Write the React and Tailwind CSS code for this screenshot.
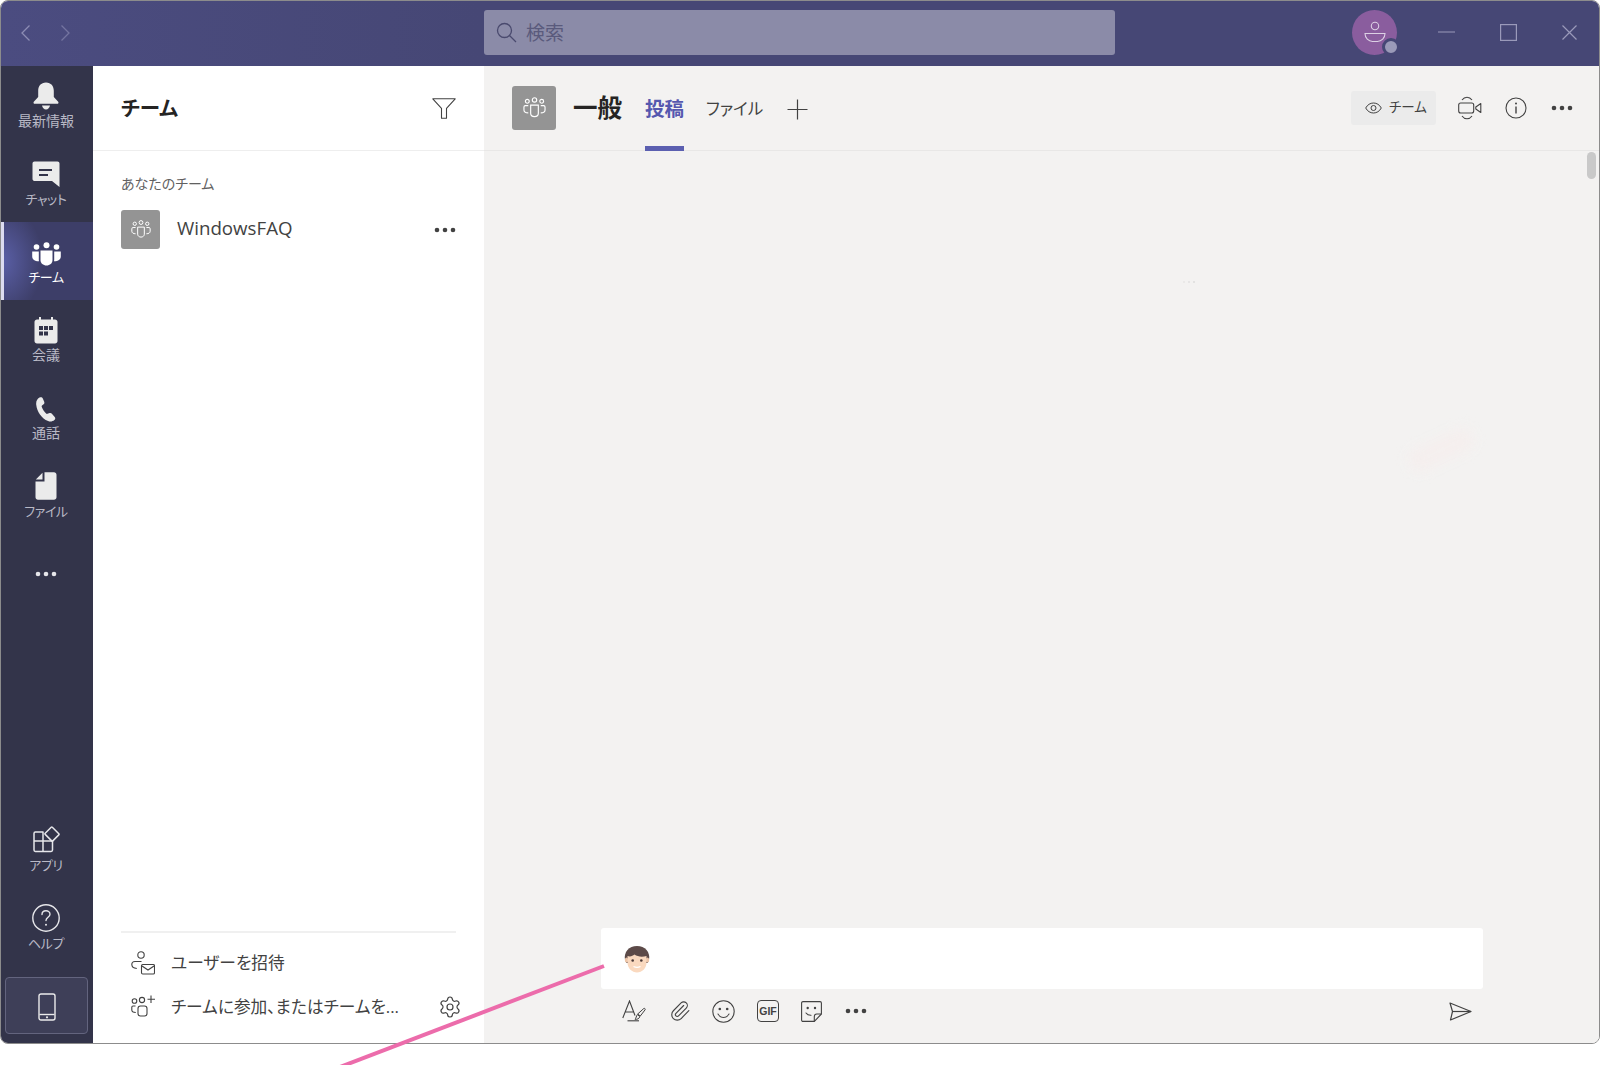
import React from "react";
import { Paperclip, Settings } from "lucide-react";

const FONT = "font-['Open_Sans','Noto_Sans_CJK_JP',sans-serif] [font-feature-settings:'palt']";
const Svg = ({ w, h, vb, children, className = "" }) => (
  <svg width={w} height={h} viewBox={vb} fill="none" className={`shrink-0 ${className}`}>{children}</svg>
);

const Bell = () => (
  <Svg w={26} h={28} vb="0 0 26 28">
    <path d="M13 0.5c5 0 7.8 3.6 7.8 8.2v6.3l4.4 4.7c.7.9.1 2.1-1 2.1H1.8c-1.100 0-1.700-1.200-1-2.100L5.200 15V8.700C5.200 4.100 8 .5 13 .5z" fill="#ebebeb" />
    <path d="M9 23.600h8c-.4 2.400-2 3.900-4 3.900s-3.600-1.500-4-3.900z" fill="#ebebeb" />
  </Svg>
);
const Chat = () => (
  <Svg w={28} h={27} vb="0 0 28 27">
    <path d="M2.500.5h23c1.100 0 2 .9 2 2v23.500l-7.500-6H2.500c-1.100 0-2-.9-2-2V2.500c0-1.100.9-2 2-2z" fill="#ebebeb" />
    <path d="M7 8h13v2H7zM7 13h9v2H7z" fill="#33344a" />
  </Svg>
);
const TeamSolid = () => (
  <Svg w={29} h={24} vb="0 0 29 24">
    <circle cx="14.500" cy="3.200" r="3" fill="#fff" />
    <circle cx="4.500" cy="5" r="2.800" fill="#fff" />
    <circle cx="24.500" cy="5" r="2.800" fill="#fff" />
    <path d="M8.500 8.500h12v9.500c0 3.200-2.700 5.500-6 5.500s-6-2.300-6-5.500z" fill="#fff" />
    <path d="M.2 9.500h6.600v8.300c0 .6.100 1 .2 1.500C3.200 19.500.2 17.500.2 14.500zM28.800 9.500h-6.600v8.300c0 .6-.1 1-.2 1.500 3.800.2 6.800-1.800 6.800-4.800z" fill="#fff" />
  </Svg>
);
const Calendar = () => (
  <Svg w={24} h={27} vb="0 0 24 27">
    <path d="M5 0h2v3H5zM17 0h2v3h-2z" fill="#ebebeb" />
    <path d="M3 2.500h18c1.400 0 2.500 1.100 2.500 2.500v19c0 1.400-1.100 2.500-2.500 2.500H3C1.600 26.500.5 25.400.5 24V5C.5 3.600 1.600 2.500 3 2.500z" fill="#ebebeb" />
    <path d="M5 9h4v4H5zM10 9h4v4h-4zM15 9h4v4h-4zM5 14.500h4v4H5zM10 14.500h4v4h-4z" fill="#33344a" />
  </Svg>
);
const Phone = () => (
  <Svg w={21} h={25} vb="0 0 21 25">
    <path d="M3.500.6C5 0 6.300.3 6.800 1.600l1.400 3.200c.4 1 .1 1.900-.6 2.500L6 8.600c-.4.400-.4.900-.2 1.400.9 2.400 2.400 4.700 4.300 6.500.4.400.9.500 1.400.3l2.100-.7c1-.3 1.900 0 2.500.8l2.600 3c.9 1.100.7 2.300-.3 3.100-1.800 1.500-4.200 2-6.300 1C5.600 21.600.9 14.700.2 7.500-.1 4.500 1.200 1.700 3.500.6z" fill="#ebebeb" />
  </Svg>
);
const FileI = () => (
  <Svg w={22} h={28} vb="0 0 22 28">
    <path d="M9.500.3H19c1.400 0 2.500 1.100 2.500 2.500v22.500c0 1.400-1.100 2.500-2.500 2.500H3C1.600 27.800.5 26.700.5 25.300V9.500h9zM.8 7.500 7.500.8v6.700z" fill="#ebebeb" />
  </Svg>
);
const Dots = ({ c = "#424242", size = 22 }) => (
  <Svg w={size} h={6} vb="0 0 22 6">
    <circle cx="3" cy="3" r="2.300" fill={c} />
    <circle cx="11" cy="3" r="2.300" fill={c} />
    <circle cx="19" cy="3" r="2.300" fill={c} />
  </Svg>
);
const Apps = () => (
  <Svg w={28} h={28} vb="0 0 28 28">
    <g stroke="#e6e6ea" strokeWidth="1.500" strokeLinejoin="round">
      <path d="M2 7.500c0-.8.600-1.400 1.400-1.400h7.600v8.900H2zM2 15h9v10.500H3.400c-.8 0-1.400-.6-1.400-1.400zM11 15h9.500v9.100c0 .8-.6 1.400-1.400 1.400H11z" />
      <path d="M20.300 1.300 26.800 7.800c.3.300.3.800 0 1.100l-6 6c-.3.300-.8.300-1.100 0L13.200 8.400c-.3-.3-.3-.8 0-1.100l6-6c.3-.3.800-.3 1.100 0z" />
    </g>
  </Svg>
);
const Help = () => (
  <Svg w={28} h={28} vb="0 0 28 28">
    <circle cx="14" cy="14" r="13.200" stroke="#e6e6ea" strokeWidth="1.400" />
    <path d="M10 10.500c0-2.300 1.800-3.800 4-3.800s4 1.500 4 3.500c0 3-4 3.200-4 6.300" stroke="#e6e6ea" strokeWidth="1.400" strokeLinecap="round" />
    <circle cx="14" cy="20.800" r="1" fill="#e6e6ea" />
  </Svg>
);
const Mobile = () => (
  <Svg w={18} h={28} vb="0 0 18 28">
    <rect x="1" y="1" width="16" height="26" rx="2" stroke="#ebebeb" strokeWidth="1.400" />
    <path d="M1.500 21.500h15" stroke="#ebebeb" strokeWidth="1.400" />
    <circle cx="9" cy="24.300" r="1.100" fill="#ebebeb" />
  </Svg>
);

const TeamOutline = ({ size = 24, c = "#fff", sw = 1.200 }) => (
  <Svg w={size} h={size * 0.92} vb="0 0 24 22">
    <g stroke={c} strokeWidth={sw}>
      <circle cx="12" cy="3" r="2.300" />
      <circle cx="4.500" cy="4.500" r="2" />
      <circle cx="19.500" cy="4.500" r="2" />
      <path d="M8 8.500h8v8.500c0 2-1.800 3.500-4 3.500s-4-1.500-4-3.500z" />
      <path d="M5.500 9H2.500C1.500 9 1 9.600 1 10.500v3c0 1.800 1.800 3 4.500 3M18.500 9h3c1 0 1.500.6 1.500 1.500v3c0 1.800-1.800 3-4.500 3" />
    </g>
  </Svg>
);

const NavItem = ({ icon, label, active, kana }) => (
  <div className={`relative h-[78px] pr-[2px] flex flex-col items-center ${active ? "bg-[radial-gradient(ellipse_60px_80px_at_0%_50%,#5b60a8_0%,#3d3e68_70%,#3d3e68_100%)]" : ""}`}>
    {active && <div className="absolute left-0 top-0 bottom-0 w-[3px] bg-[#dcdcf0]" />}
    <div className="h-[44px] flex items-end justify-center pb-[1px] shrink-0 w-full mt-[1px]">{icon}</div>
    <div className={`leading-[18px] mt-[1px] ${kana ? "text-[13px] tracking-[-0.4px]" : "text-[14px]"} ${active ? "text-white" : "text-[#b9b9c6]"}`}>{label}</div>
  </div>
);

const Sidebar = () => (
  <div className="w-[92px] shrink-0 bg-[#33344a] flex flex-col">
    <NavItem icon={<Bell />} label="最新情報" />
    <NavItem icon={<Chat />} label="チャット" kana />
    <NavItem icon={<TeamSolid />} label="チーム" active kana />
    <NavItem icon={<Calendar />} label="会議" />
    <NavItem icon={<Phone />} label="通話" />
    <NavItem icon={<FileI />} label="ファイル" kana />
    <div className="h-[78px] pt-[2px] pr-[2px] flex items-center justify-center"><Dots c="#e6e6ea" size={28} /></div>
    <div className="mt-auto">
      <NavItem icon={<Apps />} label="アプリ" kana />
      <NavItem icon={<Help />} label="ヘルプ" kana />
      <div className="mt-[11px] ml-[4px] mr-[5px] mb-[9px] h-[57px] pt-[3px] rounded-[4px] border border-[#63647e] bg-[#3e3f58] flex items-center justify-center"><Mobile /></div>
    </div>
  </div>
);

const TitleBar = () => (
  <div className="h-[65px] shrink-0 pb-[2px] bg-[linear-gradient(90deg,#4b4c80_0%,#464775_30%,#464775_100%)] flex items-center">
    <div className="w-[483px] shrink-0 flex items-center pl-[19px] gap-[29px]">
      <Svg w={11} h={18} vb="0 0 11 18"><path d="M9.500 1.500 2 9l7.500 7.500" stroke="#8c8cb3" strokeWidth="1.300" /></Svg>
      <Svg w={11} h={18} vb="0 0 11 18"><path d="M1.500 1.500 9 9l-7.500 7.500" stroke="#7474a0" strokeWidth="1.300" /></Svg>
    </div>
    <div className="w-[631px] h-[45px] rounded-[3px] bg-[#8b8ba8] flex items-center pl-[12px] gap-[9px]">
      <Svg w={21} h={21} vb="0 0 21 21">
        <circle cx="8.500" cy="8.500" r="7" stroke="#4a4a6e" strokeWidth="1.300" />
        <path d="m13.500 13.500 6.500 6.500" stroke="#4a4a6e" strokeWidth="1.300" />
      </Svg>
      <span className="text-[19px] text-[#5a5a7c] leading-none mt-[2px]">検索</span>
    </div>
    <div className="ml-[237px] w-[45px] h-[45px] rounded-full bg-[#8a5d9e] relative flex items-center justify-center shrink-0">
      <Svg w={22} h={24} vb="0 0 22 24">
        <circle cx="11" cy="5" r="3.700" stroke="#dcd0e4" strokeWidth="1.100" />
        <path d="M1 12.500h20c0 4.500-3.500 8-7.500 8h-5C4.500 20.500 1 17 1 12.500z" stroke="#dcd0e4" strokeWidth="1.100" />
      </Svg>
      <div className="absolute right-[-3px] bottom-[-1px] w-[18px] h-[18px] rounded-full bg-[#9a9ab8] border-[3px] border-[#464775]" />
    </div>
    <div className="ml-[41px] flex items-center gap-[45px] text-[#9d9dbd]">
      <Svg w={17} h={17} vb="0 0 17 17"><path d="M0 8h17" stroke="#9a9aba" strokeWidth="1.200" /></Svg>
      <Svg w={17} h={17} vb="0 0 17 17"><rect x=".6" y=".6" width="15.800" height="15.800" stroke="#9a9aba" strokeWidth="1.200" /></Svg>
      <Svg w={15} h={15} vb="0 0 15 15"><path d="m.5.5 14 14m0-14-14 14" stroke="#9a9aba" strokeWidth="1.200" /></Svg>
    </div>
  </div>
);

const Panel = () => (
  <div className="w-[391px] shrink-0 bg-white flex flex-col">
    <div className="h-[85px] shrink-0 border-b border-[#eeeeee] flex items-center justify-between pl-[28px] pr-[28px]">
      <span className="text-[20.500px] font-bold text-[#252423] leading-none">チーム</span>
      <Svg w={24} h={21} vb="0 0 24 21">
        <path d="M.8.8h22.400l-8.700 9.500v9.900H9.500v-9.900z" stroke="#424242" strokeWidth="1.100" strokeLinejoin="round" />
      </Svg>
    </div>
    <div className="pl-[28px] pr-[28px] pt-[23px] flex-1 flex flex-col">
      <div className="text-[14px] leading-[20px] text-[#616161]">あなたのチーム</div>
      <div className="mt-[16px] flex items-center h-[39px]">
        <div className="w-[39px] h-[39px] rounded-[3px] bg-[#949494] flex items-center justify-center"><TeamOutline size={20} /></div>
        <span className="ml-[17px] text-[18.700px] text-[#424242] leading-none -mt-[2px]">WindowsFAQ</span>
        <span className="ml-auto flex"><Dots /></span>
      </div>
      <div className="mt-auto h-[2px] bg-[#f0f0f0]" />
      <div className="h-[110px] shrink-0 relative pt-[14px]">
        <div className="flex items-center h-[32px] pl-[10px]">
          <Svg w={24} h={24} vb="0 0 24 24">
            <g stroke="#424242" strokeWidth="1.100">
              <circle cx="10" cy="4" r="3.200" />
              <path d="M10.500 10.500H4C2 10.500 .8 11.800 .8 13.500c0 2 1.800 3.700 5 4" />
              <rect x="10.500" y="13.500" width="13" height="9.500" rx="1.200" />
              <path d="m11 15 6 4 6-4" />
            </g>
          </Svg>
          <span className="ml-[16px] text-[16.700px] text-[#424242] leading-none">ユーザーを招待</span>
        </div>
        <div className="flex items-center h-[32px] pl-[10px] mt-[12px]">
          <Svg w={24} h={24} vb="0 0 24 24">
            <g stroke="#424242" strokeWidth="1.100">
              <circle cx="3.500" cy="6" r="2.300" />
              <circle cx="11" cy="5" r="2.600" />
              <rect x="7" y="11" width="9" height="10" rx="2.500" />
              <path d="M4.500 11H2C1.200 11 .8 11.500 .8 12.300V15c0 1.500 1.300 2.500 4 2.500" />
              <path d="M20 .5v7.500M16.500 4.200h7.500" />
            </g>
          </Svg>
          <span className="ml-[16px] text-[16.700px] text-[#424242] leading-none whitespace-nowrap">チームに参加、またはチームを...</span>
          <Settings size={24} strokeWidth={1.2} color="#424242" className="ml-auto mr-[-6px] shrink-0" />
        </div>
      </div>
    </div>
  </div>
);

const MainHeader = () => (
  <div className="h-[85px] shrink-0 border-b border-[#e8e7e6] flex items-center pl-[28px] pr-[26px]">
    <div className="w-[44px] h-[44px] rounded-[3px] bg-[#949494] flex items-center justify-center"><TeamOutline size={23} /></div>
    <span className="ml-[17px] text-[24.500px] font-bold text-[#252423] leading-none">一般</span>
    <div className="ml-[23px] relative self-stretch flex items-center">
      <span className="text-[19.500px] font-bold text-[#5558af] leading-none mt-[2px]">投稿</span>
      <div className="absolute left-0 right-0 bottom-[-1px] h-[5px] bg-[#5b5fb0]" />
    </div>
    <span className="ml-[22px] text-[16.500px] text-[#424242] leading-none mt-[2px]">ファイル</span>
    <span className="ml-[24px] flex mt-[2px]">
      <Svg w={21} h={21} vb="0 0 21 21"><path d="M10.500.5v20M.5 10.500h20" stroke="#424242" strokeWidth="1.200" /></Svg>
    </span>
    <div className="ml-auto flex items-center">
      <div className="w-[85px] h-[34px] rounded-[3px] bg-[#ebebeb] flex items-center pl-[14px] gap-[7px]">
        <Svg w={17} h={12} vb="0 0 17 12">
          <path d="M.7 6C2.500 2.700 5.300 1 8.500 1s6 1.700 7.800 5c-1.800 3.300-4.600 5-7.800 5S2.500 9.300.7 6z" stroke="#424242" strokeWidth="1" />
          <circle cx="8.500" cy="6" r="2.500" stroke="#424242" strokeWidth="1" />
        </Svg>
        <span className="text-[13.500px] text-[#424242] leading-none">チーム</span>
      </div>
      <span className="ml-[22px] flex">
        <Svg w={24} h={24} vb="0 0 24 24">
          <rect x=".7" y="7" width="15" height="10" rx="2" stroke="#424242" strokeWidth="1.100" />
          <path d="M22.800 7.500v9l-5-3.500v-2z" stroke="#424242" strokeWidth="1.100" strokeLinejoin="round" />
          <path d="M4 4c1.300-1.800 3-2.800 5-2.800S12.700 2.200 14 4M4 20c1.300 1.800 3 2.800 5 2.800s3.700-1 5-2.800" stroke="#424242" strokeWidth="1.100" />
        </Svg>
      </span>
      <span className="ml-[23px] flex">
        <Svg w={22} h={22} vb="0 0 22 22">
          <circle cx="11" cy="11" r="10" stroke="#424242" strokeWidth="1.100" />
          <path d="M11 9.500v7" stroke="#424242" strokeWidth="1.400" />
          <circle cx="11" cy="6.500" r="1" fill="#424242" />
        </Svg>
      </span>
      <span className="ml-[24px] flex"><Dots /></span>
    </div>
  </div>
);

const Avatar = () => (
  <Svg w={28} h={28} vb="0 0 28 28">
    <path d="M2 15C.5 7 6 1 14 1s13.500 6 12 14l-1.500 3H3.500z" fill="#5c4a48" />
    <ellipse cx="3.500" cy="15" rx="1.700" ry="2.600" fill="#ecc5a8" />
    <ellipse cx="24.500" cy="15" rx="1.700" ry="2.600" fill="#ecc5a8" />
    <path d="M4.500 11c3 1 5 0 7-1.500 3 2 7 3 12 1.500v7c0 5-4.500 9.500-9.500 9.500S4.500 23 4.500 18z" fill="#fad9bf" />
    <circle cx="9.700" cy="15.500" r="1.300" fill="#4a3a38" />
    <circle cx="18.300" cy="15.500" r="1.300" fill="#4a3a38" />
    <path d="M10.500 21.500c2 1 5 1 7 0" stroke="#fff" strokeWidth="1.200" />
  </Svg>
);

const S = "#424242";
const Toolbar = () => (
  <div className="h-[44px] mb-[10px] flex items-center pl-[21px] pr-[11px]">
    <span className="flex w-[24px]">
      <Svg w={24} h={22} vb="0 0 24 22">
        <path d="M.8 18 7.500 1l5.500 14.500M3 12h8.500" stroke={S} strokeWidth="1.100" />
        <path d="M5.500 20.800H17" stroke={S} strokeWidth="1.100" />
        <path d="M21.800 8.500c.8-.5 1.800.4 1.300 1.300l-4.800 6.200-2.600-2zM15.300 14.600l2.500 2c-.5 2-2.400 3-4.800 2.700 1.200-.9 1.300-3.600 2.300-4.700z" stroke={S} strokeWidth="1" strokeLinejoin="round" />
      </Svg>
    </span>
    <span className="ml-[23px] flex w-[21px]">
      <Paperclip size={22} strokeWidth={1.2} color={S} className="shrink-0" />
    </span>
    <span className="ml-[22px] flex w-[23px]">
      <Svg w={23} h={23} vb="0 0 23 23">
        <circle cx="11.500" cy="11.500" r="10.700" stroke={S} strokeWidth="1.100" />
        <circle cx="7.800" cy="9" r="1.300" fill={S} />
        <circle cx="15.200" cy="9" r="1.300" fill={S} />
        <path d="M6 14c1.300 2.300 3.200 3.500 5.500 3.500S15.700 16.300 17 14" stroke={S} strokeWidth="1.100" strokeLinecap="round" />
      </Svg>
    </span>
    <span className="ml-[22px] flex items-center justify-center w-[22px] h-[22px] rounded-[4px] border border-[#424242]">
      <span className="text-[10.500px] font-bold leading-none text-[#424242] font-['Liberation_Sans',sans-serif]">GIF</span>
    </span>
    <span className="ml-[22px] flex w-[21px]">
      <Svg w={21} h={21} vb="0 0 21 21">
        <path d="M2 .6h17c.8 0 1.400.6 1.400 1.400v11l-7 7.400H2c-.8 0-1.400-.6-1.400-1.400V2C.6 1.200 1.200.6 2 .6z" stroke={S} strokeWidth="1.100" strokeLinejoin="round" />
        <path d="M13.300 20.300v-4.500c0-1.500 1-2.800 2.500-2.800h4.500" stroke={S} strokeWidth="1.100" />
        <circle cx="6.700" cy="7" r="1.200" fill={S} />
        <circle cx="14" cy="7" r="1.200" fill={S} />
        <path d="M5 12c1.200 1.600 3 2.400 5 2.300" stroke={S} strokeWidth="1.100" strokeLinecap="round" />
      </Svg>
    </span>
    <span className="ml-[23px] flex"><Dots /></span>
    <span className="ml-auto flex">
      <Svg w={23} h={19} vb="0 0 23 19">
        <path d="M1 1 22 9.500 1.500 18 3.500 9.500z" stroke={S} strokeWidth="1.200" strokeLinejoin="round" />
        <path d="M3.500 9.500H22" stroke={S} strokeWidth="1.200" />
      </Svg>
    </span>
  </div>
);

const Main = () => (
  <div className="flex-1 min-w-0 bg-[#f3f2f1] flex flex-col relative">
    <MainHeader />
    <div className="flex-1 relative">
      <div className="absolute left-[699px] top-[130px] flex gap-[3px]">
        <span className="w-[2px] h-[2px] rounded-full bg-[#e7e6e5]" />
        <span className="w-[2px] h-[2px] rounded-full bg-[#e2e1e0]" />
        <span className="w-[2px] h-[2px] rounded-full bg-[#dddcdb]" />
      </div>
      <div className="absolute left-[922px] top-[287px] w-[70px] h-[24px] -rotate-[25deg] rounded-full bg-[#f5efee] blur-[6px]" />
      <div className="absolute right-[3px] top-[1px] w-[9px] h-[27px] rounded-full bg-[#c9c9c9]" />
    </div>
    <div className="w-[882px] ml-[117px] shrink-0">
      <div className="h-[61px] bg-white rounded-[3px] flex items-center pl-[22px]"><Avatar /></div>
      <Toolbar />
    </div>
  </div>
);

export default function App() {
  return (
    <div className={`relative w-[1600px] h-[1065px] bg-white overflow-hidden ${FONT}`}>
      <div className="w-[1600px] h-[1044px] border border-[#8c8c8c] rounded-[8px] overflow-hidden flex flex-col">
        <TitleBar />
        <div className="flex-1 min-h-0 flex">
          <Sidebar />
          <Panel />
          <Main />
        </div>
      </div>
      <svg className="absolute left-0 top-0 pointer-events-none" width="1600" height="1065" viewBox="0 0 1600 1065" fill="none">
        <path d="M604 966 340 1067" stroke="#ec6cab" strokeWidth="4" />
      </svg>
    </div>
  );
}
